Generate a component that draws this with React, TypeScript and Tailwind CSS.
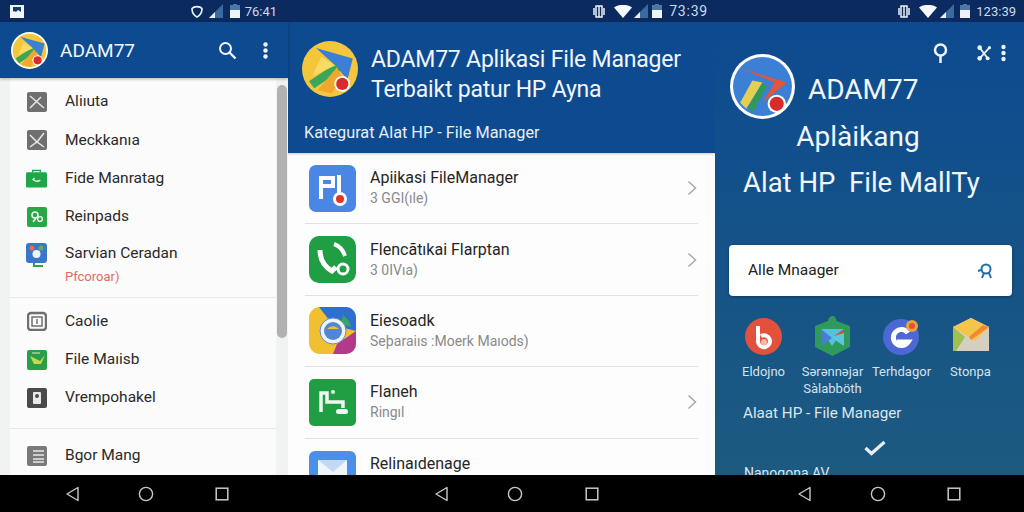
import React from "react";

const F = { fontFamily: "Roboto, 'Liberation Sans', sans-serif" };

function Nav({ cls, sq = "ml-[3px]" }: { cls: string; sq?: string }) {
  return (
    <div className={`h-[37px] bg-black flex items-center ${cls}`}>
      <svg width="16" height="16" viewBox="0 0 16 16" fill="none" stroke="#c9c9c9" strokeWidth="1.4"><path d="M13 1.5v13L2 8z" strokeLinejoin="round" /></svg>
      <svg width="16" height="16" viewBox="0 0 16 16" fill="none" stroke="#c9c9c9" strokeWidth="1.4"><circle cx="8" cy="8" r="6.6" /></svg>
      <svg className={sq} width="14" height="14" viewBox="0 0 14 14" fill="none" stroke="#c9c9c9" strokeWidth="1.5"><rect x="1.2" y="1.2" width="11.6" height="11.6" /></svg>
    </div>
  );
}

const Wifi = () => <svg width="18" height="13" viewBox="0 0 18 13"><path d="M0 2.5C5-1 13-1 18 2.5L9 13z" fill="#f4f7fb" /></svg>;
const Signal = () => <svg width="14" height="14" viewBox="0 0 14 14"><path d="M0 14L14 0v14z" fill="#3a6a9e" /><path d="M0 14L6 8v6z" fill="#e6edf5" /></svg>;
const Batt = () => <svg width="10" height="14" viewBox="0 0 10 14"><path d="M3 0h4v1h3v13H0V1h3z" fill="#4d78a6" /><rect y="6" width="10" height="8" fill="#eef3f8" /></svg>;
const Vib = () => <svg width="12" height="13" viewBox="0 0 12 13" fill="none" stroke="#eef3f8" strokeWidth="1.5"><rect x="3" y="1" width="6" height="11" /><path d="M1 3v7M11 3v7M6 1v11" /></svg>;

function Time({ t, cls }: { t: string; cls: string }) {
  return <span className={`leading-none text-[#cfdbe9] ${cls}`}>{t}</span>;
}

function Logo({ size, ring = "#fff", variant = 0 }: { size: number; ring?: string; variant?: number }) {
  return (
    <svg width={size} height={size} viewBox="0 0 64 64" className="shrink-0">
      <circle cx="32" cy="32" r="32" fill={ring} />
      <circle cx="32" cy="32" r="29" fill={variant === 2 ? "#3b80d4" : "#f4c63c"} />
      {variant === 2 ? (
        <>
          <path d="M10 14L56 28L32 48L44 28z" fill="#e2553f" />
          <path d="M22 26L32 28L16 54L10 48z" fill="#e4cf55" />
          <path d="M32 28L36 32L22 58L18 52z" fill="#2f9a55" />
        </>
      ) : (
        <>
          <path d="M16 8L58 20L52 44L38 28z" fill="#3b80d4" />
          <path d="M38 26L8 46L14 54L44 34z" fill="#3aa65a" />
          <path d="M40 30L18 56L34 60L46 42z" fill="#f0a72e" />
          <path d="M22 18L38 28L12 40z" fill="#f9db63" />
        </>
      )}
      <circle cx="46" cy="49" r="9" fill="#fff" />
      <circle cx="46" cy="49" r="7" fill="#d92b2b" />
    </svg>
  );
}

function Row1({ icon, label }: { icon: React.ReactNode; label: string }) {
  return (
    <div className="flex items-center h-[38.3px] pl-[16px] gap-[18px] shrink-0">
      <div className="w-[21px] h-[21px] flex items-center justify-center">{icon}</div>
      <span className="text-[15.5px] leading-none text-[#2a2a2a] whitespace-nowrap">{label}</span>
    </div>
  );
}

const G = ({ children, bg = "#6f6f6f" }: { children?: React.ReactNode; bg?: string }) => (
  <svg width="20" height="20" viewBox="0 0 20 20">
    <rect width="20" height="20" rx="2" fill={bg} />
    {children}
  </svg>
);

function Row2({ icon, title, sub, chevron = true, border = true }: { icon: React.ReactNode; title: string; sub?: string; chevron?: boolean; border?: boolean }) {
  return (
    <div className={`h-[71.4px] shrink-0 flex items-center pl-[4px] pr-[1px] ${border ? "border-b border-[#dfe2e4]" : ""}`}>
      <div className="w-[47px] h-[47px] mr-[14px]">{icon}</div>
      <div className="flex-1 flex flex-col gap-[2px] -mt-[1px]">
        <span className="text-[16px] leading-[20px] text-[#262626] whitespace-nowrap">{title}</span>
        <span className="text-[14px] leading-[17px] text-[#8a8a8a] whitespace-nowrap">{sub}</span>
      </div>
      {chevron && (
        <svg width="10" height="16" viewBox="0 0 10 16" fill="none" stroke="#a8a8a8" strokeWidth="1.5"><path d="M1.5 1.5L8.5 8l-7 6.5" /></svg>
      )}
    </div>
  );
}

function AppIcon({ label, label2, icon }: { label: string; label2?: string; icon: React.ReactNode }) {
  return (
    <div className="flex flex-col items-center shrink-0 w-[69px]">
      <div className="h-[40px] flex items-center justify-center">{icon}</div>
      <span className="mt-[7px] text-[13px] leading-[17px] text-[#d5e2ec] whitespace-nowrap">{label}</span>
      {label2 && <span className="text-[13px] leading-[17px] text-[#d5e2ec] whitespace-nowrap">{label2}</span>}
    </div>
  );
}

export default function App() {
  return (
    <div className="w-[1024px] h-[512px] flex overflow-hidden bg-black" style={F}>
      {/* Panel 1 */}
      <div className="w-[288px] flex flex-col shrink-0">
        <div className="h-[22px] bg-[#0a2a60] flex items-center pl-[10px] pr-[11px]">
          <svg width="14" height="13" viewBox="0 0 14 13"><path d="M0 0h14v13H0z" fill="#f2f5f9" /><path d="M3 2h8v5L8 5 6 7 4 6 3 7z" fill="#173a70" /></svg>
          <div className="flex-1" />
          <svg className="mr-[6px]" width="12" height="13" viewBox="0 0 12 13" fill="none" stroke="#eef3f8" strokeWidth="1.6"><path d="M1 3.5C3 1 9 1 11 3.5 11 8 8 11 6 12 4 11 1 8 1 3.5z" /></svg>
          <Signal />
          <div className="w-[7px]" />
          <Batt />
          <div className="w-[5px]" />
          <Time t="76:41" cls="text-[13px]" />
        </div>
        <div className="h-[56px] bg-[#0d4a90] flex items-center pl-[11px] pr-[20px] shadow-[0_1px_3px_rgba(0,0,0,0.3)] z-10">
          <Logo size={37} />
          <span className="ml-[12px] text-[19px] leading-none text-[#f2f6fb] flex-1">ADAM77</span>
          <svg className="mr-[26px]" width="19" height="19" viewBox="0 0 19 19" fill="none" stroke="#f2f6fb" strokeWidth="2"><circle cx="7.5" cy="7.5" r="5.5" /><path d="M11.5 11.5L17.5 17.5" strokeWidth="2.4" /></svg>
          <svg width="5" height="17" viewBox="0 0 5 17" fill="#f2f6fb"><circle cx="2.5" cy="2.5" r="2.2" /><circle cx="2.5" cy="8.5" r="2.2" /><circle cx="2.5" cy="14.5" r="2.2" /></svg>
        </div>
        <div className="flex-1 bg-[#f1f2f2] flex pl-[10px] overflow-hidden">
          <div className="w-[266px] bg-[#fbfbfb] flex flex-col pt-[5px] overflow-hidden shrink-0">
            <Row1 label="Aliıuta" icon={<G><path d="M3 4l14 12M3 16L14 5" stroke="#e6e6e6" strokeWidth="1.5" /></G>} />
            <Row1 label="Meckkanıa" icon={<G><path d="M3 5l7 7 7-9M3 17l7-5 7 5" stroke="#e6e6e6" strokeWidth="1.5" fill="none" /></G>} />
            <Row1 label="Fide Manratag" icon={<svg width="22" height="19" viewBox="0 0 22 19"><path d="M7 3V1h8v2" stroke="#1fa64a" fill="none" strokeWidth="1.5" /><rect y="3" width="22" height="16" rx="1.5" fill="#1fa64a" /><path d="M7 10c2 3 6 3 8 1M7 11l2-2" stroke="#dff3e4" strokeWidth="1.5" fill="none" /></svg>} />
            <Row1 label="Reinpads" icon={<G bg="#2aa646"><circle cx="8" cy="8" r="3" fill="none" stroke="#e8f6ea" strokeWidth="1.6" /><circle cx="13" cy="12" r="2.4" fill="none" stroke="#e8f6ea" strokeWidth="1.4" /><path d="M6 15l3-4" stroke="#e8f6ea" strokeWidth="1.5" /></G>} />
            <div className="h-[61px] shrink-0 flex pl-[16px] gap-[18px] pt-[7px]">
              <svg className="shrink-0" width="21" height="26" viewBox="0 0 21 26"><rect width="21" height="20" rx="3" fill="#3c76c8" /><circle cx="6" cy="5" r="2.5" fill="#ec6a4a" /><circle cx="15" cy="5" r="2.5" fill="#63b05a" /><circle cx="10.5" cy="11" r="4" fill="#eef3fa" /><path d="M8 23h9" stroke="#2aa646" strokeWidth="2" /><path d="M8 20v4" stroke="#2aa646" strokeWidth="2" /></svg>
              <div className="flex flex-col">
                <span className="text-[15.5px] leading-[20px] text-[#2a2a2a] whitespace-nowrap">Sarvian Ceradan</span>
                <span className="mt-[5px] text-[13px] leading-[17px] text-[#e06b68] whitespace-nowrap">Pfcoroar)</span>
              </div>
            </div>
            <div className="h-px bg-[#e9e9e9] shrink-0" />
            <div className="h-[4px] shrink-0" />
            <Row1 label="Caolie" icon={<svg width="20" height="20" viewBox="0 0 20 20"><rect x="1" y="2" width="18" height="17" rx="3" fill="none" stroke="#6f6f6f" strokeWidth="2.4" /><rect x="5" y="6" width="10" height="9" fill="none" stroke="#6f6f6f" strokeWidth="1.5" /><path d="M10 8v5" stroke="#6f6f6f" strokeWidth="1.5" /></svg>} />
            <Row1 label="File Maıisb" icon={<G bg="#2b9e49"><path d="M3 6l10 5 5-6-4 9H7z" fill="#c6d94b" /><path d="M5 3h8" stroke="#dfe9c8" strokeWidth="1" /></G>} />
            <Row1 label="Vrempohakel" icon={<G bg="#4a4a4a"><rect x="6" y="4" width="8" height="12" rx="1" fill="#e8e8e8" /><circle cx="10" cy="8" r="2" fill="#4a4a4a" /></G>} />
            <div className="h-[11px] shrink-0" />
            <div className="h-px bg-[#e9e9e9] shrink-0" />
            <div className="h-[8px] shrink-0" />
            <Row1 label="Bgor Mang" icon={<G bg="#7a7a7a"><path d="M6 5h11M6 9h11M6 13h11M6 16h11" stroke="#e9e9e9" strokeWidth="1.4" /></G>} />
          </div>
          <div className="flex-1 pt-[7px] pl-px">
            <div className="w-[10px] h-[253px] bg-[#b1b1b1] rounded-[5px]" />
          </div>
        </div>
        <Nav cls="pl-[65px] gap-[57px]" sq="ml-[4px]" />
      </div>

      {/* Panel 2 */}
      <div className="w-[427px] flex flex-col shrink-0">
        <div className="h-[22px] bg-[#0a2a60] flex items-center justify-end pr-[7px]">
          <Vib />
          <div className="w-[9px]" />
          <Wifi />
          <div className="w-[2px]" />
          <Signal />
          <div className="w-[4px]" />
          <Batt />
          <div className="w-[7px]" />
          <Time t="73:39" cls="text-[14px] tracking-[0.8px]" />
        </div>
        <div className="h-[131px] bg-[#0d4a90] flex flex-col pl-[14px] pt-[19px]">
          <div className="flex items-start">
            <Logo size={56} ring="#f4c63c" />
            <div className="ml-[13px] mt-[4px] text-[23px] tracking-[-0.2px] leading-[30px] text-[#f1f6fb] whitespace-nowrap">
              <div>ADAM77 Aplikasi File Manager</div>
              <div>Terbaikt patur HP Ayna</div>
            </div>
          </div>
          <div className="mt-[17px] ml-[2px] text-[16.3px] leading-[22px] text-[#e6eef7] whitespace-nowrap">Kategurat Alat HP - File Manager</div>
        </div>
        <div className="flex-1 bg-[#fdfdfd] flex flex-col px-[17px] overflow-hidden shadow-[inset_0_3px_3px_-2px_rgba(0,0,0,0.2)]">
          <Row2 title="Apiikasi FileManager" sub="3 GGI(ıle)" icon={<svg width="47" height="47" viewBox="0 0 47 47"><rect width="47" height="47" rx="7" fill="#4a86e4" /><path d="M12 34V13h12v8H12M30 10v20" stroke="#fff" strokeWidth="4" fill="none" /><circle cx="31" cy="34" r="7" fill="#fff" /><circle cx="31" cy="34" r="4" fill="#e0352b" /></svg>} />
          <Row2 title="Flencãtıkai Flarptan" sub="3 0IVıa)" icon={<svg width="47" height="47" viewBox="0 0 47 47"><rect width="47" height="47" rx="10" fill="#1f9e44" /><path d="M11 14c0 10 5 17 12 21l4-4" stroke="#fff" strokeWidth="5" fill="none" /><path d="M25 8c6 2 9 6 11 12" stroke="#fff" strokeWidth="4" fill="none" /><circle cx="34" cy="33" r="5" stroke="#fff" strokeWidth="3" fill="none" /></svg>} />
          <Row2 title="Eiesoadk" sub="Seþaraiıs :Moerk Maıods)" chevron={false} icon={<svg width="47" height="47" viewBox="0 0 47 47"><rect width="47" height="47" rx="11" fill="#f0c030" /><path d="M10 0h27a10 10 0 0 1 10 10v14L24 18z" fill="#2f6fd0" /><path d="M47 24v13a10 10 0 0 1-10 10H24l4-10z" fill="#b33a8a" /><path d="M34 8c4 3 7 7 8 12l-10-3z" fill="#3aa65a" /><circle cx="24" cy="24" r="13" fill="#eef3f6" stroke="#5b8dd6" strokeWidth="1" /><circle cx="24" cy="24" r="9" fill="#5385d3" /><path d="M18 22a8 8 0 0 1 12 0z" fill="#f0c030" /></svg>} />
          <Row2 title="Flaneh" sub="Ringıl" icon={<svg width="47" height="47" viewBox="0 0 47 47"><rect width="47" height="47" rx="5" fill="#1f9e44" /><path d="M12 33V14h6v9h16v6" stroke="#f0f7f0" strokeWidth="3.5" fill="none" /><circle cx="24" cy="13" r="2" fill="#f0f7f0" /><rect x="27" y="30" width="12" height="5" rx="2.5" fill="#f0f7f0" /></svg>} />
          <Row2 title="Relinaıdenage" sub="Selectad" border={false} chevron={false} icon={<svg width="47" height="47" viewBox="0 0 47 47"><rect width="47" height="47" rx="6" fill="#4a8fe8" /><rect x="9" y="9" width="29" height="24" fill="#f0f5fb" /><path d="M9 9l15 12L38 9" fill="#c3d9f3" /></svg>} />
        </div>
        <Nav cls="pl-[146px] gap-[57px]" sq="ml-[5px]" />
      </div>

      {/* Panel 3 */}
      <div className="flex-1 flex flex-col min-w-0">
        <div className="h-[22px] bg-[#0a2a60] flex items-center justify-end pr-[8px]">
          <Vib />
          <div className="w-[9px]" />
          <Wifi />
          <div className="w-[3px]" />
          <Signal />
          <div className="w-[6px]" />
          <Batt />
          <div className="w-[6px]" />
          <Time t="123:39" cls="text-[13px]" />
        </div>
        <div className="flex-1 bg-gradient-to-b from-[#0d4a90] to-[#1d5a80] flex flex-col overflow-hidden pl-[15px] pr-[12px]">
          <div className="h-[20px] mt-[21px] shrink-0 flex items-center justify-end pr-[6px]">
            <svg className="mr-[29px]" width="15" height="22" viewBox="0 0 15 22" fill="none" stroke="#f2f6fb" strokeWidth="2.5"><circle cx="7.5" cy="8" r="5.5" /><path d="M7.5 14v7" /></svg>
            <svg className="mr-[8px]" width="16" height="16" viewBox="0 0 18 18" fill="#eef3f8"><circle cx="3" cy="3" r="2.6" /><circle cx="14" cy="3" r="1.8" /><circle cx="3" cy="15" r="2.6" /><circle cx="12" cy="15" r="2.2" /><path d="M3 3l9 12M14 3L3 15" stroke="#eef3f8" strokeWidth="2" /></svg>
            <svg width="5" height="18" viewBox="0 0 5 18" fill="#eef3f8"><circle cx="2.5" cy="3" r="2.2" /><circle cx="2.5" cy="9" r="2.2" /><circle cx="2.5" cy="15" r="2.2" /></svg>
          </div>
          <div className="flex items-center -mt-[10px] h-[66px] shrink-0">
            <Logo size={65} variant={2} />
            <span className="ml-[13px] mt-[8px] text-[28px] leading-none text-[#f1f6fb]">ADAM77</span>
          </div>
          <div className="-mt-[2px] text-center text-[28px] leading-[40px] text-[#f1f6fb] pr-[26px] whitespace-nowrap shrink-0">Aplàikang</div>
          <div className="mt-[6px] ml-[13px] text-[27.5px] leading-[40px] text-[#f1f6fb] whitespace-nowrap shrink-0">Alat HP&nbsp; File MallTy</div>
          <div className="mt-[42px] -ml-px h-[51px] w-[283px] shrink-0 bg-white rounded-[4px] flex items-center pl-[19px] pr-[16px] justify-between shadow-[0_1px_3px_rgba(0,0,0,0.35)]">
            <span className="text-[15.5px] text-[#222]">Alle Mnaager</span>
            <svg width="19" height="18" viewBox="0 0 19 18" fill="none" stroke="#1d6fa8" strokeWidth="2"><circle cx="9" cy="7" r="4.5" /><path d="M1 9l3-1M5 16l2-5M14 16l-2-5" /></svg>
          </div>
          <div className="mt-[20px] flex -ml-px shrink-0 h-[81px]">
            <AppIcon label="Eldojno" icon={<svg width="37" height="37" viewBox="0 0 37 37"><circle cx="18.5" cy="18.5" r="18.5" fill="#e3503c" /><path d="M13 8v16a6 6 0 1 0 3-6" stroke="#fff" strokeWidth="4" fill="none" /><circle cx="19" cy="24" r="3" fill="#f7b9a8" /></svg>} />
            <AppIcon label="Sərənnəjar" label2="Sàlabböth" icon={<svg width="35" height="40" viewBox="0 0 35 40"><path d="M17.5 0c2 0 4 2 4 5L35 10v21L17.5 40 0 31V10l13-5c0-3 2.5-5 4.5-5z" fill="#2f9a5b" /><path d="M6 13h23L17 30z" fill="#55c0e0" /><path d="M6 13l11 9L6 30z" fill="#4a7bd8" /><path d="M29 13L17 22l12 8z" fill="#5cc7df" /><path d="M19 20l10-7v4z" fill="#c9542c" /></svg>} />
            <AppIcon label="Terhdagor" icon={<svg width="37" height="37" viewBox="0 0 37 37"><circle cx="18" cy="19" r="18" fill="#4e67d6" /><path d="M25 15a8 8 0 1 0 0 9H14" stroke="#fff" strokeWidth="5" fill="none" /><circle cx="29" cy="8" r="6" fill="#e8a33a" /><circle cx="29" cy="8" r="3" fill="#e0503a" /></svg>} />
            <AppIcon label="Stonpa" icon={<svg width="36" height="36" viewBox="0 0 36 36"><path d="M0 9L18 0l18 9v24H0z" fill="#d4cfc2" /><path d="M0 9L18 0l18 9-14 14z" fill="#f3c64a" /><path d="M0 9l12 10L3 33H0z" fill="#9fc04a" /><path d="M36 9L18 22l-2-3L30 7z" fill="#ef8a30" /></svg>} />
          </div>
          <div className="mt-[6px] text-[15.2px] leading-[20px] text-[#dbe6ee] ml-[13px] whitespace-nowrap shrink-0">Alaat HP - File Manager</div>
          <div className="mt-[17px] flex justify-center pl-[8px] shrink-0">
            <svg width="22" height="16" viewBox="0 0 22 16" fill="none" stroke="#e6eef4" strokeWidth="3.2"><path d="M1.5 8l6 5.5L20.5 2" /></svg>
          </div>
          <div className="mt-[8px] ml-[14px] text-[14px] leading-[18px] text-[#dbe6ee] whitespace-nowrap shrink-0">Nanogona AV</div>
        </div>
        <Nav cls="pl-[82px] gap-[57px]" sq="ml-[4px]" />
      </div>
    </div>
  );
}
